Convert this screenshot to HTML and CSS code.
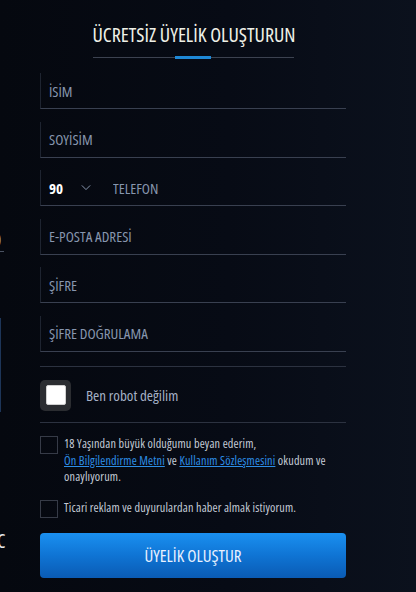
FILE: index.html
```html
<!DOCTYPE html>
<html lang="tr">
<head>
  <meta charset="UTF-8" />
  <meta name="viewport" content="width=device-width, initial-scale=1.0"/>
  <title>Üyelik</title>
  <link rel="stylesheet" href="styles.css">
</head>
<body>

  <div class="backdrop">
    <span class="bd-zero">0</span>
    <span class="bd-line"></span>
    <span class="bd-bar"></span>
    <span class="bd-c">C</span>
  </div>

  <main class="register">
    <div class="title-wrap">
      <h1>ÜCRETSİZ ÜYELİK OLUŞTURUN</h1>
      <div class="title-line"><span></span></div>
    </div>

    <form class="fields">
      <div class="field"><input type="text" placeholder="İSİM" /></div>
      <div class="field"><input type="text" placeholder="SOYİSİM" /></div>
      <div class="field phone">
        <span class="code">90</span>
        <svg viewBox="0 0 12 8"><path d="M1 1.5l5 5 5-5" /></svg>
        <input type="tel" placeholder="TELEFON" />
      </div>
      <div class="field"><input type="email" placeholder="E-POSTA ADRESİ" /></div>
      <div class="field"><input type="password" placeholder="ŞİFRE" /></div>
      <div class="field last"><input type="password" placeholder="ŞİFRE DOĞRULAMA" /></div>

      <div class="captcha">
        <div class="captcha-box"><span></span></div>
        <span>Ben robot değilim</span>
      </div>

      <label class="check">
        <span class="box"></span>
        <span>18 Yaşından büyük olduğumu beyan ederim,<br>
          <a href="#">Ön Bilgilendirme Metni</a> ve <a href="#">Kullanım Sözleşmesini</a> okudum ve onaylıyorum.</span>
      </label>
      <label class="check single">
        <span class="box"></span>
        <span>Ticari reklam ve duyurulardan haber almak istiyorum.</span>
      </label>

      <button type="button">ÜYELİK OLUŞTUR</button>
    </form>
  </main>

</body>
</html>
```

FILE: styles.css
```css
body {
  margin: 0;
  width: 416px;
  height: 592px;
  overflow: hidden;
  position: relative;
  font-family: "Open Sans", "Noto Sans", sans-serif;
  font-stretch: 75%;
  background: linear-gradient(90deg, #05080f 0%, #070b15 55%, #0b111d 100%);
  color: #c3cad6;
}

/* bits of the page behind the form */
.backdrop {
  position: absolute;
  left: 0;
  top: 0;
  width: 10px;
  height: 592px;
}
.bd-zero {
  position: absolute;
  left: -6px;
  top: 228px;
  font-size: 17px;
  color: #a3acba;
}
.bd-line {
  position: absolute;
  left: 0;
  top: 251px;
  width: 4px;
  height: 1px;
  background: #4a5262;
}
.bd-bar {
  position: absolute;
  left: 0;
  top: 318px;
  width: 1px;
  height: 94px;
  background: #1d3558;
}
.bd-c {
  position: absolute;
  left: -3px;
  top: 528px;
  font-size: 19px;
  color: #e6e8ec;
}

.register {
  width: 306px;
  margin-left: 40px;
  padding-top: 24px;
}

.title-wrap {
  width: 201px;
  margin: 0 auto;
}
.title-wrap h1 {
  margin: 0;
  font-size: 20px;
  font-weight: 400;
  color: #eef0e7;
  text-align: center;
  white-space: nowrap;
  line-height: 22px;
}
.title-line {
  margin-top: 11px;
  height: 1px;
  background: #3c4250;
  display: flex;
  justify-content: center;
  align-items: center;
}
.title-line span {
  width: 36px;
  height: 3px;
  background: #1e88d6;
}

.fields {
  margin-top: 15px;
  display: flex;
  flex-direction: column;
}

.field {
  height: 35px;
  border-left: 1px solid #1e2430;
  border-bottom: 1px solid #394050;
  display: flex;
  align-items: center;
  padding-left: 8px;
  margin-bottom: 12.6px;
}
.field.last {
  margin-bottom: 14px;
}
.field input {
  flex: 1;
  background: transparent;
  border: none;
  outline: none;
  font: inherit;
  font-size: 15px;
  color: #c3cad6;
  padding: 0;
}
.field input::placeholder {
  color: #8796ae;
}

.phone .code {
  color: #ffffff;
  font-weight: 700;
  font-size: 15px;
  width: 32px;
}
.phone svg {
  width: 10px;
  height: 7px;
  fill: none;
  stroke: #8796ae;
  stroke-width: 1.2;
  margin-right: 22px;
}

.captcha {
  border-top: 1px solid #2c3240;
  border-bottom: 1px solid #2c3240;
  padding: 13px 0 11px;
  display: flex;
  align-items: center;
  gap: 15px;
  font-size: 15px;
  color: #a5b1c6;
}
.captcha-box {
  width: 31px;
  height: 31px;
  border-radius: 5px;
  background: #2b2d31;
  display: flex;
  align-items: center;
  justify-content: center;
}
.captcha-box span {
  width: 18px;
  height: 18px;
  background: #ffffff;
  border: 1px solid #d0d0d0;
  border-radius: 2px;
}

.check {
  display: flex;
  gap: 6px;
  font-size: 12.2px;
  letter-spacing: 0.15px;
  line-height: 16.6px;
  color: #c3cad6;
  margin-top: 13px;
}
.check .box {
  flex-shrink: 0;
  width: 16px;
  height: 16px;
  border: 1px solid #363b47;
}
.check a {
  color: #2d8ee6;
}
.check.single {
  margin-top: 14px;
  align-items: center;
}

button {
  margin-top: 15px;
  height: 45px;
  border: none;
  border-radius: 4px;
  background: linear-gradient(180deg, #1a90f0 0%, #0f74d4 50%, #0a5bb4 100%);
  color: #e9f1ff;
  font: inherit;
  font-size: 17px;
  cursor: pointer;
}
```
